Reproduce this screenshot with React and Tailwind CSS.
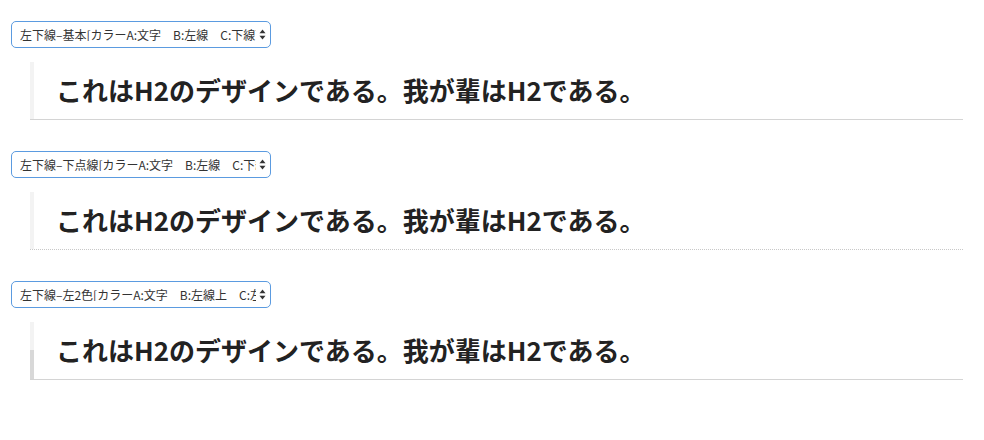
import React from 'react'

const font = { fontFamily: '"Noto Sans CJK JP", "Noto Sans", sans-serif' }

function FakeSelect({ label }) {
  return (
    <div className="flex h-[27px] w-[260px] items-center rounded-[5px] border border-[#5b9be0] bg-white pl-[8px] pr-[4px]">
      <div className="flex-1 overflow-hidden whitespace-nowrap text-[12px] leading-none text-[#333]">{label}</div>
      <svg width="7" height="11" viewBox="0 0 7 11" className="ml-[3px] shrink-0">
        <path d="M3.5 0.5 L6.5 4.3 L0.5 4.3 Z" fill="#333" />
        <path d="M3.5 10.5 L6.5 6.7 L0.5 6.7 Z" fill="#333" />
      </svg>
    </div>
  )
}

function Heading({ variant }) {
  const bottom =
    variant === 'dotted'
      ? 'border-b border-dotted border-[#c8c8c8]'
      : 'border-b border-[#d4d4d4]'
  return (
    <div className={`ml-[19px] mr-[21px] mt-[14px] flex ${bottom}`}>
      {variant === 'two' ? (
        <div className="w-[4px] shrink-0 bg-[linear-gradient(#f3f3f3_0%,#f3f3f3_50%,#d8d8d8_50%,#d8d8d8_100%)]" />
      ) : (
        <div className="w-[4px] shrink-0 bg-[#f3f3f3]" />
      )}
      <h2 className="pt-[11px] pb-[12px] pl-[22px] text-[26px] font-bold leading-[34px] text-[#222]">
        これはH2のデザインである。我が輩はH2である。
      </h2>
    </div>
  )
}

export default function App() {
  const rows = [
    { label: '左下線–基本[カラーA:文字　B:左線　C:下線]', variant: 'basic' },
    { label: '左下線–下点線[カラーA:文字　B:左線　C:下線]', variant: 'dotted' },
    { label: '左下線–左2色[カラーA:文字　B:左線上　C:左線下]', variant: 'two' },
  ]
  return (
    <div className="min-h-[440px] w-[984px] bg-white pt-[21px] pl-[11px]" style={font}>
      {rows.map((r, i) => (
        <div key={i} className={i === 0 ? '' : 'mt-[31px]'}>
          <FakeSelect label={r.label} />
          <Heading variant={r.variant} />
        </div>
      ))}
    </div>
  )
}
